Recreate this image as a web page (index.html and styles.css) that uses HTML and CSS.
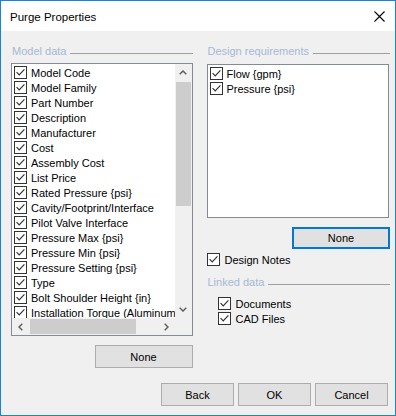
FILE: index.html
```html
<!DOCTYPE html>
<html lang="en">
<head>
    <meta charset="UTF-8">
    <title>Purge Properties</title>
    <link rel="stylesheet" href="styles.css">
</head>
<body>
<div class="window">
    <div class="titlebar">
        <span class="title">Purge Properties</span>
        <svg class="close" width="11" height="11" viewBox="0 0 11 11">
            <path d="M0.5 0.5 L10.5 10.5 M10.5 0.5 L0.5 10.5" stroke="#000" stroke-width="1.1" fill="none"/>
        </svg>
    </div>

    <div class="content">
        <div class="columns">
            <!-- model data column -->
            <div class="col col-left">
                <div class="group-title"><span>Model data</span><i></i></div>
                <div class="listbox model-list">
                    <ul class="items">
                        <li><b class="check"></b>Model Code</li>
                        <li><b class="check"></b>Model Family</li>
                        <li><b class="check"></b>Part Number</li>
                        <li><b class="check"></b>Description</li>
                        <li><b class="check"></b>Manufacturer</li>
                        <li><b class="check"></b>Cost</li>
                        <li><b class="check"></b>Assembly Cost</li>
                        <li><b class="check"></b>List Price</li>
                        <li><b class="check"></b>Rated Pressure {psi}</li>
                        <li><b class="check"></b>Cavity/Footprint/Interface</li>
                        <li><b class="check"></b>Pilot Valve Interface</li>
                        <li><b class="check"></b>Pressure Max {psi}</li>
                        <li><b class="check"></b>Pressure Min {psi}</li>
                        <li><b class="check"></b>Pressure Setting {psi}</li>
                        <li><b class="check"></b>Type</li>
                        <li><b class="check"></b>Bolt Shoulder Height {in}</li>
                        <li><b class="check"></b>Installation Torque (Aluminum) {in-lb}</li>
                    </ul>
                    <div class="vscroll">
                        <div class="arrow">
                            <svg width="8" height="5" viewBox="0 0 8 5"><path d="M0.7 4.3 L4 1 L7.3 4.3" stroke="#606060" stroke-width="1.5" fill="none"/></svg>
                        </div>
                        <div class="track"><div class="thumb"></div></div>
                        <div class="arrow">
                            <svg width="8" height="5" viewBox="0 0 8 5"><path d="M0.7 0.7 L4 4 L7.3 0.7" stroke="#606060" stroke-width="1.5" fill="none"/></svg>
                        </div>
                    </div>
                    <div class="hscroll">
                        <div class="arrow">
                            <svg width="5" height="8" viewBox="0 0 5 8"><path d="M4.3 0.7 L1 4 L4.3 7.3" stroke="#606060" stroke-width="1.5" fill="none"/></svg>
                        </div>
                        <div class="track"><div class="thumb"></div></div>
                        <div class="arrow">
                            <svg width="5" height="8" viewBox="0 0 5 8"><path d="M0.7 0.7 L4 4 L0.7 7.3" stroke="#606060" stroke-width="1.5" fill="none"/></svg>
                        </div>
                    </div>
                    <div class="corner"></div>
                </div>
                <div class="btn-row">
                    <button class="btn btn-none">None</button>
                </div>
            </div>

            <!-- design requirements column -->
            <div class="col col-right">
                <div class="group-title"><span>Design requirements</span><i></i></div>
                <div class="listbox req-list">
                    <ul class="items">
                        <li><b class="check"></b>Flow {gpm}</li>
                        <li><b class="check"></b>Pressure {psi}</li>
                    </ul>
                </div>
                <div class="btn-row">
                    <button class="btn btn-none focused">None</button>
                </div>
                <label class="option notes"><b class="check"></b>Design Notes</label>

                <div class="group-title linked"><span>Linked data</span><i></i></div>
                <div class="linked-list">
                    <label class="option"><b class="check"></b>Documents</label>
                    <label class="option"><b class="check"></b>CAD Files</label>
                </div>
            </div>
        </div>

        <div class="footer">
            <button class="btn btn-foot">Back</button>
            <button class="btn btn-foot">OK</button>
            <button class="btn btn-foot">Cancel</button>
        </div>
    </div>
</div>
</body>
</html>
```

FILE: styles.css
```css
body {
    margin: 0;
    padding: 0;
    font-family: "Liberation Sans", Arial, sans-serif;
    font-size: 11px;
    color: #000;
    background: #fff;
}

.window {
    width: 396px;
    height: 416px;
    box-sizing: border-box;
    border: 1px solid #1883d7;
    background: #f0f0f0;
    display: flex;
    flex-direction: column;
}

.titlebar {
    height: 30px;
    background: #fff;
    display: flex;
    align-items: center;
    justify-content: space-between;
    padding: 0 10px 0 9px;
}

.title {
    font-size: 11.5px;
    margin-top: 1px;
}

.close {
    display: block;
    margin-top: 0;
}

.content {
    padding: 13px 6px 0 10px;
}

.columns {
    display: flex;
    gap: 14px;
}

.col {
    display: flex;
    flex-direction: column;
}

.col-left {
    width: 182px;
}

.col-right {
    width: 183px;
}

/* group box headers */
.group-title {
    height: 14px;
    display: flex;
    align-items: center;
    gap: 4px;
    padding-left: 1px;
    color: #a6b9d4;
}

.group-title i {
    flex: 1;
    height: 1px;
    background: #a0a0a0;
    margin-top: 4px;
}

.col-right .group-title {
    margin-right: -1px;
}

/* list boxes */
.listbox {
    box-sizing: border-box;
    border: 1px solid #868a96;
    background: #fff;
    overflow: hidden;
}

.model-list {
    margin-top: 5px;
    height: 273px;
    display: grid;
    grid-template-columns: 1fr 17px;
    grid-template-rows: 1fr 17px;
}

.req-list {
    margin-top: 6px;
    height: 154px;
}

.items {
    list-style: none;
    margin: 0;
    padding: 1px 0 0 2px;
    overflow: hidden;
    white-space: nowrap;
}

.items li {
    height: 15px;
    display: flex;
    align-items: center;
    gap: 4px;
}

.check {
    flex: none;
    display: inline-block;
    width: 13px;
    height: 13px;
    box-sizing: border-box;
    border: 1px solid #333;
    background: #fff url("data:image/svg+xml,%3Csvg xmlns='http://www.w3.org/2000/svg' width='11' height='11' viewBox='0 0 11 11'%3E%3Cpath d='M1.6 5.2 L4.2 7.8 L9.4 2.4' stroke='%23333' stroke-width='1.2' fill='none'/%3E%3C/svg%3E") no-repeat 0 0;
}

/* scrollbars */
.vscroll {
    background: #f0f0f0;
    display: flex;
    flex-direction: column;
}

.vscroll .arrow {
    height: 17px;
    display: flex;
    align-items: center;
    justify-content: center;
}

.vscroll .track {
    flex: 1;
    padding: 1px 1px 0 1px;
}

.vscroll .thumb {
    height: 124px;
    background: #cdcdcd;
}

.hscroll {
    background: #f0f0f0;
    display: flex;
}

.hscroll .arrow {
    width: 17px;
    display: flex;
    align-items: center;
    justify-content: center;
}

.hscroll .track {
    flex: 1;
    padding: 1px 0 1px 1px;
}

.hscroll .thumb {
    width: 106px;
    height: 100%;
    background: #cdcdcd;
}

.corner {
    background: #f0f0f0;
}

/* buttons */
.btn {
    font-family: inherit;
    font-size: 11px;
    color: #000;
    background: #e1e1e1;
    border: 1px solid #adadad;
    box-sizing: border-box;
    padding: 0;
    margin: 0;
}

.btn-row {
    display: flex;
    justify-content: flex-end;
}

.btn-none {
    width: 98px;
    height: 23px;
    margin-top: 9px;
}

.btn-none.focused {
    width: 98px;
    height: 22px;
    border: 2px solid #0078d7;
    margin-right: -1px;
}

/* checkbox options */
.option {
    height: 15px;
    display: flex;
    align-items: center;
    gap: 5px;
}

.notes {
    margin-top: 3px;
}

.linked {
    margin-top: 8px;
}

.linked-list {
    margin-top: 7px;
    padding-left: 11px;
}

.footer {
    margin-top: 15px;
    display: flex;
    justify-content: flex-end;
    gap: 4px;
    padding-right: 1px;
}

.btn-foot {
    width: 73px;
    height: 23px;
}
```
